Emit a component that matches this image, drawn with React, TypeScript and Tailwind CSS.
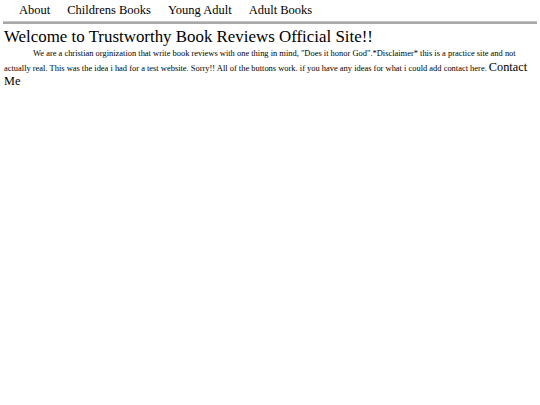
import React from "react";

const links = ["About", "Childrens Books", "Young Adult", "Adult Books"];

export default function App() {
  return (
    <div className="min-h-screen bg-white text-black font-['Liberation_Serif',serif]">
      {/* Nav */}
      <ul className="flex gap-[17px] pl-[19px] pt-[2px] text-[12.5px] leading-[17px]">
        {links.map((l) => (
          <li key={l}>{l}</li>
        ))}
      </ul>
      <div className="mx-[3px] mt-[2px] h-[3px] bg-[#a8a8a8] border-t border-[#c4c4c4]" />

      {/* Content */}
      <h1 className="px-[4px] pt-[3px] text-[16.9px] leading-[20px]">
        Welcome to Trustworthy Book Reviews Official Site!!
      </h1>
      <p className="px-[4px] text-[8.45px] leading-[13.5px] indent-[29px]">
        We are a christian orginization that write book reviews with one thing in mind, "Does it honor God".*Disclaimer* this is a practice site and not actually real. This was the idea i had for a test website. Sorry!! All of the buttons work. if you have any ideas for what i could add contact here.{" "}
        <a className="text-[12.3px] leading-[13.5px]">Contact Me</a>
      </p>
    </div>
  );
}
